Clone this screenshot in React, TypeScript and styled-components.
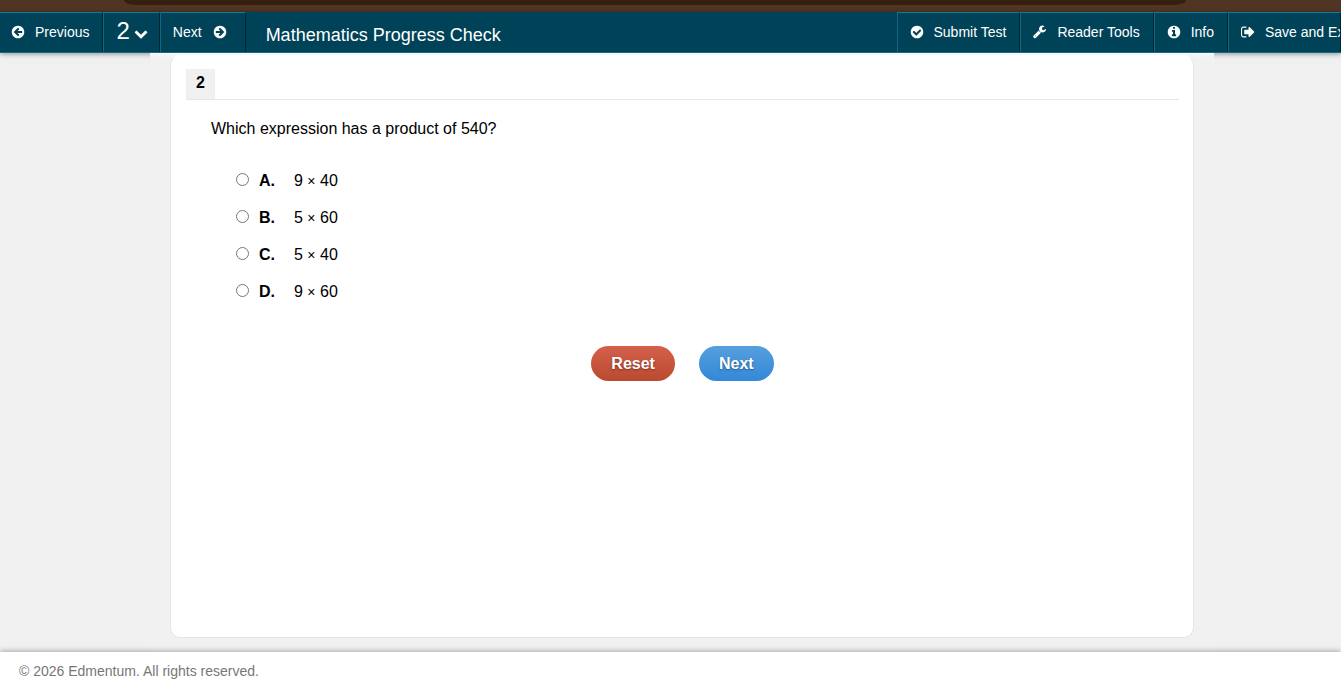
import React from "react";
import styled, { createGlobalStyle } from "styled-components";

const GlobalStyle = createGlobalStyle`
  * { box-sizing: border-box; }
  body {
    margin: 0;
    background: #f0f0f0;
    color: #000;
    font: 16px/20px "Liberation Sans", Arial, sans-serif;
  }
`;

const Page = styled.div`
  display: flex;
  flex-direction: column;
  min-height: 100vh;
  overflow: hidden;
`;

const TopStrip = styled.div`
  flex: none;
  height: 12px;
  padding: 0 155px 0 124px;
  background: #503524;
`;

const StripTab = styled.div`
  height: 5px;
  background: #371f10;
  border-radius: 0 0 12px 12px / 0 0 5px 5px;
`;

const Toolbar = styled.header`
  display: flex;
  flex: none;
  height: 41px;
  background: #004358;
  border-bottom: 1px solid #0c6b85;
  box-shadow: 0 1px 5px rgba(0, 0, 0, 0.4);
`;

const ToolButton = styled.button<{ $clip?: boolean; $wide?: boolean }>`
  display: flex;
  flex: none;
  align-items: center;
  gap: ${(p) => (p.$wide ? 11 : 10)}px;
  width: ${(p) => (p.$clip ? "113px" : "auto")};
  height: 40px;
  padding: 0 ${(p) => (p.$wide ? 18 : 13)}px 2px 12px;
  overflow: hidden;
  border: solid;
  border-width: 1px 1px 0 1px;
  border-color: #16799a #002533 transparent #146580;
  background: transparent;
  color: #fff;
  font: 14px/20px "Liberation Sans", Arial, sans-serif;
  white-space: nowrap;

  &:first-child {
    padding-left: 11px;
    border-left-width: 0;
  }
`;

const NumberButton = styled(ToolButton)`
  align-items: flex-end;
  gap: 4px;
  padding-right: 11px;
  padding-bottom: 11px;
  font-size: 24px;
`;

const Title = styled.h1`
  flex: 1;
  margin: 0;
  padding: 3px 0 0 20px;
  font-size: 18px;
  font-weight: 400;
  line-height: 40px;
  color: #fff;
  white-space: nowrap;
`;

const Icon = styled.svg`
  flex: none;
  width: 14px;
  height: 14px;
  fill: currentColor;
`;

const Column = styled.main`
  display: flex;
  flex: 1;
  margin: 0 127px 0 150px;
  padding: 2px 20px 14px;
  position: relative;
  background: linear-gradient(#fff 0, #fff 1px, #f5f5f5 1px, #f1f1f1 8px);
`;

const Card = styled.section`
  flex: 1;
  padding: 13px 14px 0 15px;
  background: #fff;
  border: 1px solid #e6e6e6;
  border-top-color: #fff;
  border-radius: 10px;
`;

const QuestionBar = styled.div`
  display: flex;
  border-bottom: 1px solid #e6e6e6;
`;

const QuestionNumber = styled.h2`
  margin: 0;
  padding: 4px 10px 6px;
  background: #f0f0f0;
  font-size: 16px;
  line-height: 20px;
`;

const Question = styled.fieldset`
  margin: 0;
  padding: 19px 25px 0;
  border: 0;
`;

const Prompt = styled.legend`
  float: left;
  width: 100%;
  padding: 0;
`;

const Choices = styled.div`
  display: flex;
  flex-direction: column;
  gap: 17px;
  clear: both;
  padding: 32px 0 0 25px;
`;

const Choice = styled.label`
  display: flex;
  align-items: flex-start;
`;

const Radio = styled.input`
  width: 13px;
  height: 13px;
  margin: 2px 10px 0 0;
`;

const Letter = styled.b`
  width: 35px;
`;

const Times = styled.span`
  font-size: 14px;
`;

const Actions = styled.div`
  display: flex;
  justify-content: center;
  gap: 24px;
  padding-top: 44px;
`;

const ActionButton = styled.button<{ $from: string; $to: string }>`
  height: 35px;
  padding: 0 20px;
  border: 0;
  border-radius: 18px;
  background: linear-gradient(${(p) => p.$from}, ${(p) => p.$to});
  color: #fff;
  font: bold 16px/35px "Liberation Sans", Arial, sans-serif;
  text-shadow: 0 1px 2px rgba(0, 0, 0, 0.4);
`;

const Footer = styled.footer`
  flex: none;
  position: relative;
  padding: 9px 19px 11px;
  background: #fff;
  box-shadow: 0 -1px 5px rgba(0, 0, 0, 0.3);
  color: #777;
  font-size: 14px;
  line-height: 20px;
`;

const paths = {
  left: "M1280 832v-128q0-26-19-45t-45-19h-502l189-189q19-19 19-45t-19-45l-91-91q-18-18-45-18t-45 18l-362 362-91 91q-18 18-18 45t18 45l91 91 362 362q18 18 45 18t45-18l91-91q18-18 18-45t-18-45l-189-189h502q26 0 45-19t19-45zM1536 768q0 209-103 385.500t-279.500 279.500-385.500 103-385.500-103-279.500-279.500-103-385.500 103-385.500 279.500-279.500 385.500-103 385.500 103 279.500 279.500 103 385.500z",
  check: "M1284 606q0-28-18-46l-91-90q-19-19-45-19t-45 19l-408 407-226-226q-19-19-45-19t-45 19l-91 90q-18 18-18 46 0 27 18 45l362 362q19 19 45 19 27 0 46-19l543-543q18-18 18-45zM1536 768q0 209-103 385.500t-279.500 279.500-385.500 103-385.500-103-279.500-279.500-103-385.500 103-385.500 279.500-279.500 385.500-103 385.500 103 279.500 279.500 103 385.500z",
  info: "M1024 1248v-160q0-14-9-23t-23-9h-96v-512q0-14-9-23t-23-9h-320q-14 0-23 9t-9 23v160q0 14 9 23t23 9h96v320h-96q-14 0-23 9t-9 23v160q0 14 9 23t23 9h448q14 0 23-9t9-23zM896 352v-160q0-14-9-23t-23-9h-192q-14 0-23 9t-9 23v160q0 14 9 23t23 9h192q14 0 23-9t9-23zM1536 768q0 209-103 385.500t-279.500 279.500-385.500 103-385.500-103-279.500-279.500-103-385.500 103-385.500 279.500-279.500 385.500-103 385.500 103 279.500 279.500 103 385.500z",
  wrench: "M384 1472q0-26-19-45t-45-19-45 19-19 45 19 45 45 19 45-19 19-45zM1028 1052l-682 682q-37 37-90 37-52 0-91-37l-106-108q-38-36-38-90 0-53 38-91l681-681q39 98 114.500 173.500t173.500 114.500zM1662 617q0 39-23 106-47 134-164.500 217.500t-258.500 83.500q-185 0-316.500-131.500t-131.500-316.500 131.500-316.500 316.500-131.500q58 0 121.500 16.500t107.500 46.500q16 11 16 28t-16 28l-293 169v224l193 107q5-3 79-48.500t135.500-81 70.500-35.500q15 0 23.500 10t8.500 25z",
  chevron: "M1683 808l-742 741q-19 19-45 19t-45-19l-742-741q-19-19-19-45.500t19-45.500l166-165q19-19 45-19t45 19l531 531 531-531q19-19 45-19t45 19l166 165q19 19 19 45.500t-19 45.500z",
  exit: "M640 1440q0 4 1 20t.5 26.500-3 23.500-10 19.500-20.500 6.500h-320q-119 0-203.500-84.500t-84.500-203.500v-704q0-119 84.500-203.500t203.500-84.500h320q13 0 22.500 9.500t9.500 22.500q0 4 1 20t.5 26.500-3 23.500-10 19.500-20.500 6.500h-320q-66 0-113 47t-47 113v704q0 66 47 113t113 47h312l11.500 1 11.500 3 8 5.500 7 9 2 13.500zM1568 896q0 26-19 45l-544 544q-19 19-45 19t-45-19-19-45v-288h-448q-26 0-45-19t-19-45v-384q0-26 19-45t45-19h448v-288q0-26 19-45t45-19 45 19l544 544q19 19 19 45z",
};

const choices = [
  { letter: "A.", a: 9, b: 40 },
  { letter: "B.", a: 5, b: 60 },
  { letter: "C.", a: 5, b: 40 },
  { letter: "D.", a: 9, b: 60 },
];

export default function App() {
  return (
    <Page>
      <GlobalStyle />
      <TopStrip><StripTab /></TopStrip>
      <Toolbar>
        <ToolButton>
          <Icon viewBox="-90 -90 1716 1716" aria-hidden="true"><path d={paths.left} /></Icon>
          Previous
        </ToolButton>
        <NumberButton aria-label="Question 2">
          2
          <Icon viewBox="0 80 1792 1792" aria-hidden="true"><path d={paths.chevron} /></Icon>
        </NumberButton>
        <ToolButton $wide>
          Next
          <Icon viewBox="-90 -90 1716 1716" aria-hidden="true">
            <path d={paths.left} transform="rotate(180 768 768)" />
          </Icon>
        </ToolButton>
        <Title>Mathematics Progress Check</Title>
        <ToolButton>
          <Icon viewBox="-90 -90 1716 1716" aria-hidden="true"><path d={paths.check} /></Icon>
          Submit Test
        </ToolButton>
        <ToolButton>
          <Icon viewBox="0 64 1792 1792" aria-hidden="true"><path d={paths.wrench} /></Icon>
          Reader Tools
        </ToolButton>
        <ToolButton>
          <Icon viewBox="-90 -90 1716 1716" aria-hidden="true"><path d={paths.info} /></Icon>
          Info
        </ToolButton>
        <ToolButton $clip>
          <Icon viewBox="0 64 1664 1664" aria-hidden="true"><path d={paths.exit} /></Icon>
          Save and Exit
        </ToolButton>
      </Toolbar>
      <Column>
        <Card>
          <QuestionBar><QuestionNumber>2</QuestionNumber></QuestionBar>
          <Question>
            <Prompt>Which expression has a product of 540?</Prompt>
            <Choices>
              {choices.map(({ letter, a, b }) => (
                <Choice key={letter}>
                  <Radio type="radio" name="answer" value={letter} />
                  <Letter>{letter}</Letter>
                  <span>{a} <Times>×</Times> {b}</span>
                </Choice>
              ))}
            </Choices>
          </Question>
          <Actions>
            <ActionButton $from="#d4604b" $to="#b94a2f">Reset</ActionButton>
            <ActionButton $from="#559fde" $to="#3488d6">Next</ActionButton>
          </Actions>
        </Card>
      </Column>
      <Footer>© 2026 Edmentum. All rights reserved.</Footer>
    </Page>
  );
}
